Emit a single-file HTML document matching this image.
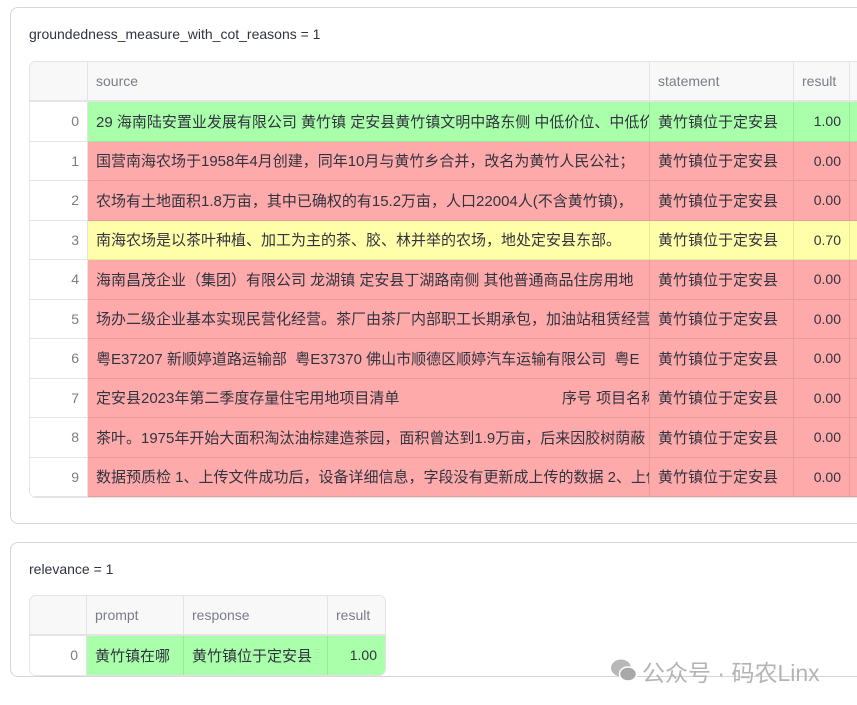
<!DOCTYPE html>
<html><head><meta charset="utf-8"><style>
body{margin:0;width:857px;height:705px;background:#fff;font-family:"Liberation Sans","Noto Sans CJK SC",sans-serif;overflow:hidden;position:relative;color:#31333f}
.card{position:absolute;left:10px;border:1px solid #d6d6d9;border-radius:8px;background:#fff}
.title{position:absolute;left:19px;font-size:14px;color:#31333f}
table{position:absolute;border-collapse:separate;border-spacing:0;font-size:15px;table-layout:fixed;border:1px solid #e4e4e6;border-radius:7px;overflow:hidden}
td,th{height:38.5px;padding:0 8px;white-space:nowrap;overflow:hidden;border-right:1px solid #e4e4e6;border-bottom:1px solid #e4e4e6;text-overflow:clip}
th{background:#f8f8f9;font-weight:normal;color:#7a7d87;text-align:left;height:38px;border-bottom:2px solid #e4e4e6;font-size:14px}
td.i{text-align:right;color:#7a7d87;background:#fff;font-size:14px}
td.r{text-align:right;font-size:14px}
.g td:not(.i){background:#aaffaa;border-color:#9ee89e}
.rd td:not(.i){background:#ffaaaa;border-color:#e89c9c}
.y td:not(.i){background:#ffffaa;border-color:#e8e89c}
</style></head><body>
<div class="card" style="top:7px;width:900px;height:515px"></div>
<div class="title" style="left:29px;top:26px">groundedness_measure_with_cot_reasons = 1</div>
<table style="left:29px;top:61px;width:860px">
<colgroup><col style="width:58px"><col style="width:562px"><col style="width:144px"><col style="width:56px"><col style="width:40px"></colgroup>
<tr><th></th><th>source</th><th>statement</th><th>result</th><th></th></tr>
<tr class="g"><td class="i">0</td><td>29 海南陆安置业发展有限公司 黄竹镇 定安县黄竹镇文明中路东侧 中低价位、中低价位</td><td>黄竹镇位于定安县</td><td class="r">1.00</td><td></td></tr>
<tr class="rd"><td class="i">1</td><td>国营南海农场于1958年4月创建，同年10月与黄竹乡合并，改名为黄竹人民公社；</td><td>黄竹镇位于定安县</td><td class="r">0.00</td><td></td></tr>
<tr class="rd"><td class="i">2</td><td>农场有土地面积1.8万亩，其中已确权的有15.2万亩，人口22004人(不含黄竹镇)，</td><td>黄竹镇位于定安县</td><td class="r">0.00</td><td></td></tr>
<tr class="y"><td class="i">3</td><td>南海农场是以茶叶种植、加工为主的茶、胶、林并举的农场，地处定安县东部。</td><td>黄竹镇位于定安县</td><td class="r">0.70</td><td></td></tr>
<tr class="rd"><td class="i">4</td><td>海南昌茂企业（集团）有限公司 龙湖镇 定安县丁湖路南侧 其他普通商品住房用地</td><td>黄竹镇位于定安县</td><td class="r">0.00</td><td></td></tr>
<tr class="rd"><td class="i">5</td><td>场办二级企业基本实现民营化经营。茶厂由茶厂内部职工长期承包，加油站租赁经营</td><td>黄竹镇位于定安县</td><td class="r">0.00</td><td></td></tr>
<tr class="rd"><td class="i">6</td><td>粤E37207 新顺婷道路运输部&nbsp; 粤E37370 佛山市顺德区顺婷汽车运输有限公司&nbsp; 粤E</td><td>黄竹镇位于定安县</td><td class="r">0.00</td><td></td></tr>
<tr class="rd"><td class="i">7</td><td>定安县2023年第二季度存量住宅用地项目清单&nbsp;&nbsp;&nbsp;&nbsp;&nbsp;&nbsp;&nbsp;&nbsp;&nbsp;&nbsp;&nbsp;&nbsp;&nbsp;&nbsp;&nbsp;&nbsp;&nbsp;&nbsp;&nbsp;&nbsp;&nbsp;&nbsp;&nbsp;&nbsp;&nbsp;&nbsp;&nbsp;&nbsp;&nbsp;&nbsp;&nbsp;&nbsp;&nbsp;&nbsp;&nbsp;&nbsp;&nbsp;&nbsp;&nbsp;序号 项目名称</td><td>黄竹镇位于定安县</td><td class="r">0.00</td><td></td></tr>
<tr class="rd"><td class="i">8</td><td>茶叶。1975年开始大面积淘汰油棕建造茶园，面积曾达到1.9万亩，后来因胶树荫蔽</td><td>黄竹镇位于定安县</td><td class="r">0.00</td><td></td></tr>
<tr class="rd"><td class="i">9</td><td>数据预质检 1、上传文件成功后，设备详细信息，字段没有更新成上传的数据 2、上传</td><td>黄竹镇位于定安县</td><td class="r">0.00</td><td></td></tr>
</table>
<div class="card" style="top:542px;width:900px;height:133px"></div>
<div class="title" style="left:29px;top:561px">relevance = 1</div>
<table style="left:29px;top:595px;width:355px">
<colgroup><col style="width:57px"><col style="width:97px"><col style="width:144px"><col style="width:57px"></colgroup>
<tr><th></th><th>prompt</th><th>response</th><th style="border-right:none">result</th></tr>
<tr class="g"><td class="i" style="border-bottom:none">0</td><td style="border-bottom:none">黄竹镇在哪</td><td style="border-bottom:none">黄竹镇位于定安县</td><td class="r" style="border:none">1.00</td></tr>
</table>
<div style="position:absolute;left:610px;top:654px;font-size:23px;color:#b4b4b4;display:flex;align-items:center">
<svg width="28" height="26" viewBox="0 0 28 26"><ellipse cx="11" cy="10" rx="10" ry="8.5" fill="#b8b8b8"/><ellipse cx="18" cy="16" rx="8.5" ry="7" fill="#a8a8a8" stroke="#fff" stroke-width="1.5"/></svg>
<span style="margin-left:4px">公众号 · 码农Linx</span></div>
</body></html>
